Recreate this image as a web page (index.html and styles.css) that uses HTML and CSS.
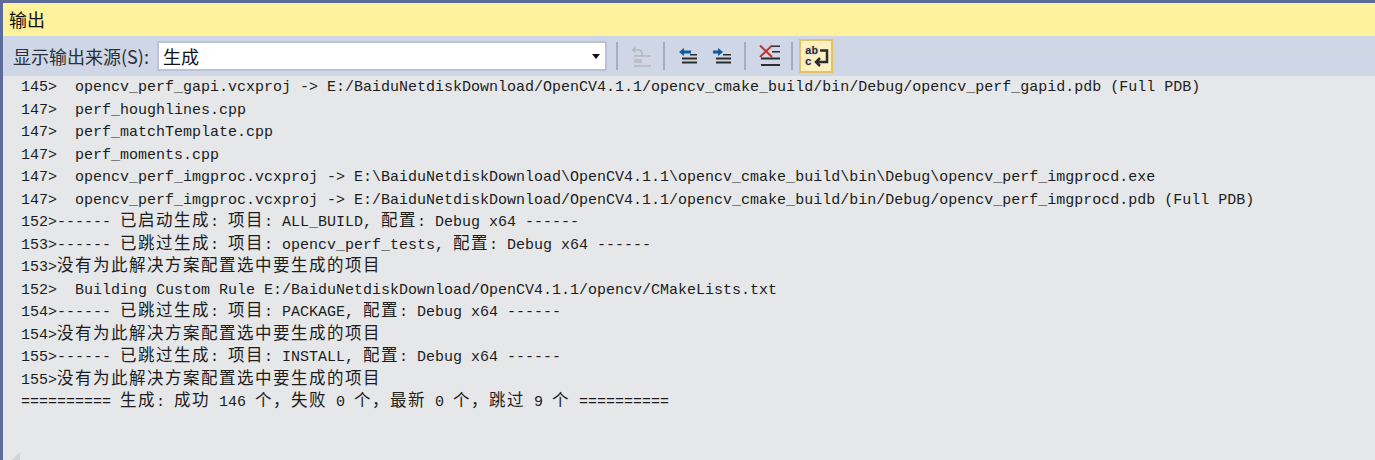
FILE: index.html
```html
<!DOCTYPE html>
<html lang="zh-CN">
<head>
<meta charset="utf-8">
<title>输出</title>
<link rel="stylesheet" href="styles.css">
</head>
<body>
<div class="window">
  <header class="title">输出</header>
  <div class="toolbar">
    <label class="source-label">显示输出来源(S):</label>
    <div class="combo"><span class="combo-text">生成</span><span class="caret"></span></div>
    <span class="sep"></span>
    <button class="tool"><svg width="24" height="24" viewBox="0 0 24 24"><path d="M2.500 6 L6.500 2.500 L6.500 9.500Z" fill="#b4b9c2"/><path d="M6 6 H10 Q13 6.500 13 10 V12" fill="none" stroke="#b4b9c2" stroke-width="1.600"/><path d="M5 12 H22 M5 22 H22" stroke="#b4b9c2" stroke-width="1.500"/><path d="M5 15 H13 V19 H5Z" fill="#bcc0c8"/></svg></button>
    <span class="sep"></span>
    <button class="tool"><svg width="24" height="24" viewBox="0 0 24 24"><path d="M3 8 L8 4 V6.500 H15 V9.500 H8 V12Z" fill="#0e5c9e"/><path d="M14 10 H21 V11.500 H14Z M6 13.500 H21 V15.500 H6Z M6 17.500 H21 V19.500 H6Z" fill="#2d2d30"/></svg></button>
    <button class="tool"><svg width="24" height="24" viewBox="0 0 24 24"><path d="M13 8 L8 4 V6.500 H3 V9.500 H8 V12Z" fill="#0e5c9e"/><path d="M13 10 H21 V11.500 H13Z M6 13.500 H21 V15.500 H6Z M6 17.500 H21 V19.500 H6Z" fill="#2d2d30"/></svg></button>
    <span class="sep"></span>
    <button class="tool"><svg width="24" height="24" viewBox="0 0 24 24"><path d="M3 1.500 L15 13 M15 1.500 L3 13" stroke="#b8372a" stroke-width="2"/><path d="M15 1.500 H23 V3 H15Z M15 7 H23 V8.500 H15Z M4 13.500 H23 V15.500 H4Z M4 20 H23 V22 H4Z" fill="#2d2d30"/></svg></button>
    <span class="sep"></span>
    <button class="tool active"><svg width="30" height="30" viewBox="0 0 30 30"><path d="M19 9.500 H26 V21 H16 M19 17 L15 21 L19 25" fill="none" stroke="#2d2d30" stroke-width="2.500"/><text x="4" y="13" class="wrap-text">ab</text><text x="4" y="24" class="wrap-text">c</text></svg></button>
  </div>
  <main class="output">
    <div class="line">145&gt;  opencv_perf_gapi.vcxproj -&gt; E:/BaiduNetdiskDownload/OpenCV4.1.1/opencv_cmake_build/bin/Debug/opencv_perf_gapid.pdb (Full PDB)</div>
    <div class="line">147&gt;  perf_houghlines.cpp</div>
    <div class="line">147&gt;  perf_matchTemplate.cpp</div>
    <div class="line">147&gt;  perf_moments.cpp</div>
    <div class="line">147&gt;  opencv_perf_imgproc.vcxproj -&gt; E:\BaiduNetdiskDownload\OpenCV4.1.1\opencv_cmake_build\bin\Debug\opencv_perf_imgprocd.exe</div>
    <div class="line">147&gt;  opencv_perf_imgproc.vcxproj -&gt; E:/BaiduNetdiskDownload/OpenCV4.1.1/opencv_cmake_build/bin/Debug/opencv_perf_imgprocd.pdb (Full PDB)</div>
    <div class="line">152&gt;------ <span class="cjk">已启动生成</span>: <span class="cjk">项目</span>: ALL_BUILD, <span class="cjk">配置</span>: Debug x64 ------</div>
    <div class="line">153&gt;------ <span class="cjk">已跳过生成</span>: <span class="cjk">项目</span>: opencv_perf_tests, <span class="cjk">配置</span>: Debug x64 ------</div>
    <div class="line">153&gt;<span class="cjk">没有为此解决方案配置选中要生成的项目</span></div>
    <div class="line">152&gt;  Building Custom Rule E:/BaiduNetdiskDownload/OpenCV4.1.1/opencv/CMakeLists.txt</div>
    <div class="line">154&gt;------ <span class="cjk">已跳过生成</span>: <span class="cjk">项目</span>: PACKAGE, <span class="cjk">配置</span>: Debug x64 ------</div>
    <div class="line">154&gt;<span class="cjk">没有为此解决方案配置选中要生成的项目</span></div>
    <div class="line">155&gt;------ <span class="cjk">已跳过生成</span>: <span class="cjk">项目</span>: INSTALL, <span class="cjk">配置</span>: Debug x64 ------</div>
    <div class="line">155&gt;<span class="cjk">没有为此解决方案配置选中要生成的项目</span></div>
    <div class="line">========== <span class="cjk">生成</span>: <span class="cjk">成功</span> 146 <span class="cjk">个，失败</span> 0 <span class="cjk">个，最新</span> 0 <span class="cjk">个，跳过</span> 9 <span class="cjk">个</span> ==========</div>
    <span class="grip"></span>
  </main>
</div>
</body>
</html>
```
FILE: styles.css
```css
* { box-sizing: border-box; }
html, body { margin: 0; height: 100%; }
body { overflow: hidden; background: #e5e7e9; }
.window {
  height: 460px;
  display: flex;
  flex-direction: column;
  border-top: 3px solid #5d6b99;
  border-left: 3px solid #5d6b99;
  font-family: "Noto Sans CJK SC", "Liberation Sans", sans-serif;
}
.title {
  height: 33px;
  flex: none;
  background: #fff29d;
  color: #111;
  font-size: 18px;
  line-height: 33px;
  padding-left: 6px;
}
.toolbar {
  height: 40px;
  flex: none;
  background: #cfd6e5;
  display: flex;
  align-items: center;
  padding-left: 10px;
}
.source-label { width: 144px; flex: none; color: #2b2f36; font-size: 18px; line-height: 24px; white-space: nowrap; }
.combo {
  width: 450px;
  height: 30px;
  flex: none;
  background: #fff;
  border: 2px solid #bac3d9;
  display: flex;
  align-items: center;
  justify-content: space-between;
  padding: 0 5px 0 4px;
  font-size: 18px;
  color: #111;
}
.caret { border-top: 5px solid #111; border-left: 4px solid transparent; border-right: 4px solid transparent; }
.sep { width: 2px; height: 28px; background: #a4adc1; margin: 0 6px 0 5px; flex: none; }
.combo + .sep { margin-left: 9px; }
.tool {
  width: 34px;
  height: 34px;
  flex: none;
  padding: 0;
  border: 0;
  background: none;
  display: flex;
  align-items: center;
  justify-content: center;
}
.tool.active { background: #fff0c0; border: 2px solid #e5c365; }
.wrap-text { font: bold 11px "Liberation Mono", monospace; fill: #2d2d30; stroke: #e4e0cf; stroke-width: 2px; paint-order: stroke; }
.output {
  flex: 1;
  position: relative;
  background: #e5e7e9;
  padding: 1px 0 0 18px;
  color: #1c1c1c;
  font-family: "Liberation Mono", "Noto Sans CJK SC", monospace;
  font-size: 15px;
}
.line { height: 22.5px; line-height: 22.5px; white-space: pre; }
.cjk { font-family: "Noto Sans CJK SC", sans-serif; font-size: 16.500px; letter-spacing: 1.500px; line-height: 0; }
.grip {
  position: absolute;
  left: 9px;
  bottom: 0;
  border-left: 8px solid transparent;
  border-bottom: 8px solid #d0d3d8;
}
```
